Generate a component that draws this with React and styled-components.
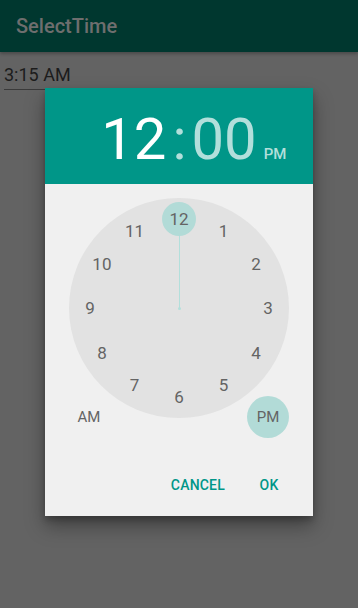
import React from 'react';
import styled, { createGlobalStyle } from 'styled-components';

const GlobalStyle = createGlobalStyle`
    html, body {
        margin: 0;
        padding: 0;
        background: #636363;
        font-family: Roboto, "Noto Sans", "Liberation Sans", sans-serif;
    }
`;

const Screen = styled.div`
    position: relative;
    width: 358px;
    height: 608px;
    overflow: hidden;
    background: #636363;
`;

const AppBar = styled.div`
    height: 52px;
    display: flex;
    align-items: center;
    padding: 0 16px;
    background: #00372f;
    color: #6e6e6e;
    font-size: 20px;
    font-weight: 500;
    box-shadow: 0 2px 3px rgba(0, 0, 0, 0.25);
`;

const Content = styled.div`
    padding: 12px 4px 0;
`;

const TimeField = styled.div`
    display: inline-block;
    padding: 0 4px 3px 0;
    font-size: 18px;
    line-height: 22px;
    color: #1c1c1c;
    border-bottom: 1px solid #3a3a3a;
    min-width: 70px;
`;

const Dialog = styled.div`
    position: absolute;
    left: 45px;
    top: 88px;
    width: 268px;
    height: 428px;
    display: flex;
    flex-direction: column;
    background: #f0f0f0;
    box-shadow: 0 10px 18px rgba(0, 0, 0, 0.35), 0 4px 6px rgba(0, 0, 0, 0.2);
`;

const Header = styled.div`
    height: 96px;
    background: #009688;
    display: grid;
    grid-template-columns: 1fr auto 1fr;
    align-items: baseline;
    padding-top: 15px;
    box-sizing: border-box;
`;

const Digits = styled.span`
    font-size: 58px;
    line-height: 72px;
    color: ${(p) => (p.$active ? '#ffffff' : '#b2dfdb')};
    justify-self: ${(p) => p.$align || 'center'};
`;

const Separator = styled.span`
    font-size: 58px;
    line-height: 72px;
    color: #b2dfdb;
    padding: 0 5px 0 6px;
`;

const RightPart = styled.span`
    justify-self: start;
    display: flex;
    align-items: baseline;
`;

const Meridiem = styled.span`
    font-size: 15px;
    font-weight: 500;
    color: #b2dfdb;
    margin-left: 7px;
`;

const ClockArea = styled.div`
    position: relative;
    height: 254px;
    display: flex;
    justify-content: center;
    padding-top: 14px;
    box-sizing: border-box;
`;

const Face = styled.div`
    position: relative;
    width: 220px;
    height: 220px;
    border-radius: 50%;
    background: #e2e2e2;
`;

const Hand = styled.div`
    position: absolute;
    left: 109.5px;
    top: 37px;
    width: 1px;
    height: 73px;
    background: #b2dfdb;
`;

const Pivot = styled.div`
    position: absolute;
    left: 108.5px;
    top: 108.5px;
    width: 3px;
    height: 3px;
    border-radius: 50%;
    background: #b2dfdb;
`;

const Selector = styled.div`
    position: absolute;
    left: 93px;
    top: 4px;
    width: 34px;
    height: 34px;
    border-radius: 50%;
    background: #b2dbd7;
`;

const Number = styled.span`
    position: absolute;
    width: 30px;
    height: 24px;
    margin: -12px 0 0 -15px;
    display: flex;
    align-items: center;
    justify-content: center;
    font-size: 17px;
    color: #646464;
`;

const PeriodButton = styled.div`
    position: absolute;
    bottom: 0;
    ${(p) => (p.$side === 'left' ? 'left: 23px;' : 'right: 24px;')}
    width: 42px;
    height: 42px;
    border-radius: 50%;
    display: flex;
    align-items: center;
    justify-content: center;
    font-size: 15px;
    color: #646464;
    background: ${(p) => (p.$selected ? '#b2dbd7' : 'transparent')};
`;

const ButtonBar = styled.div`
    margin-top: auto;
    display: flex;
    justify-content: flex-end;
    gap: 4px;
    padding: 0 12px 13px;
`;

const TextButton = styled.div`
    min-width: 64px;
    height: 36px;
    padding: 0 8px;
    box-sizing: border-box;
    display: flex;
    align-items: center;
    justify-content: center;
    font-size: 14px;
    font-weight: 500;
    color: #009688;
    letter-spacing: 0.2px;
`;

const HOURS = [12, 1, 2, 3, 4, 5, 6, 7, 8, 9, 10, 11];
const RADIUS = 89;

function ClockFace() {
    return (
        <Face>
            <Hand />
            <Pivot />
            <Selector />
            {HOURS.map((h, i) => {
                const a = (i * Math.PI) / 6;
                const x = 110 + RADIUS * Math.sin(a);
                const y = 110 - RADIUS * Math.cos(a);
                return (
                    <Number key={h} style={{ left: x, top: y }}>
                        {h}
                    </Number>
                );
            })}
        </Face>
    );
}

export default function App() {
    return (
        <Screen>
            <GlobalStyle />
            <AppBar>SelectTime</AppBar>
            <Content>
                <TimeField>3:15 AM</TimeField>
            </Content>
            <Dialog>
                <Header>
                    <Digits $active $align="end">12</Digits>
                    <Separator>:</Separator>
                    <RightPart>
                        <Digits>00</Digits>
                        <Meridiem>PM</Meridiem>
                    </RightPart>
                </Header>
                <ClockArea>
                    <ClockFace />
                    <PeriodButton $side="left">AM</PeriodButton>
                    <PeriodButton $side="right" $selected>PM</PeriodButton>
                </ClockArea>
                <ButtonBar>
                    <TextButton>CANCEL</TextButton>
                    <TextButton>OK</TextButton>
                </ButtonBar>
            </Dialog>
        </Screen>
    );
}
